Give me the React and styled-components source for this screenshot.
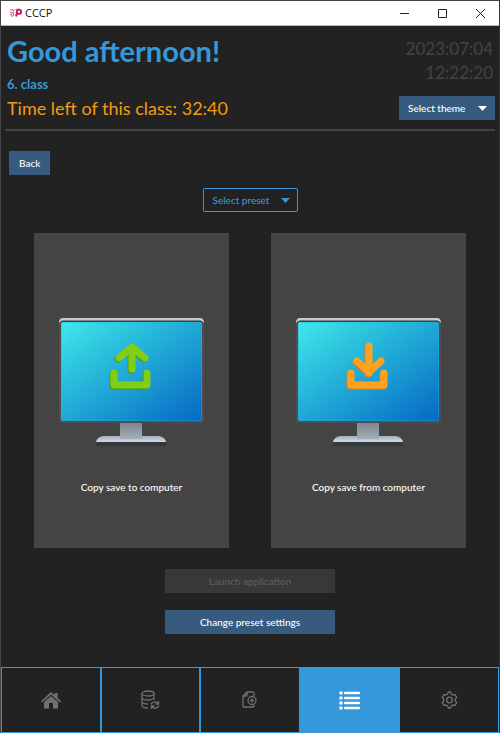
import React from "react";
import styled, { createGlobalStyle, css } from "styled-components";

const GlobalStyle = createGlobalStyle`
  *, *::before, *::after { box-sizing: border-box; }
  body { margin: 0; background: #222; font-family: Lato, "Open Sans", sans-serif; }
  h1, h2, p { margin: 0; }
  button { font: inherit; cursor: pointer; }
`;

const Window = styled.div`
  display: flex;
  flex-direction: column;
  min-height: 100vh;
  border: 1px solid #444;
  border-right-color: #333;
  border-bottom: 0;
  background: #222;
  color: #fff;
`;

const TitleBar = styled.header`
  display: flex;
  align-items: center;
  height: 25px;
  padding-left: 8px;
  background: #fff;
  color: #111;
  border-bottom: 1px solid #bbb;
`;

const AppTitle = styled.span`
  flex: 1;
  padding-left: 3px;
  font-family: "Open Sans", sans-serif;
  font-size: 11px;
  line-height: 16px;
`;

const WindowButton = styled.button`
  display: flex;
  align-items: center;
  justify-content: center;
  width: 38px;
  height: 24px;
  padding: 0;
  border: 0;
  background: none;
  color: #222;
`;

const Top = styled.section`
  display: flex;
  justify-content: space-between;
  margin: 0 4px;
  padding: 7px 0 9px 2px;
  border-bottom: 2px solid #444;
`;

const Greeting = styled.h1`
  font-size: 29px;
  line-height: 36px;
  font-weight: 700;
  color: #3498db;
`;

const ClassName = styled.h2`
  margin-top: 7px;
  font-size: 13px;
  line-height: 16px;
  font-weight: 700;
  color: #3498db;
`;

const TimeLeft = styled.p`
  margin-top: 4px;
  font-size: 18px;
  line-height: 24px;
  color: #f39c12;
`;

const Side = styled.div`
  display: flex;
  flex-direction: column;
  align-items: flex-end;
  justify-content: space-between;
`;

const Clock = styled.time`
  padding: 4px 2px 0 0;
  font-size: 17px;
  line-height: 24px;
  text-align: right;
  color: #444;
`;

const ClockLine = styled.span`
  display: block;
`;

const Button = styled.button`
  display: flex;
  align-items: center;
  justify-content: center;
  height: 24px;
  padding: 0 10px;
  border: 0;
  background: #375a7f;
  color: #fff;
  font-size: 10px;
  line-height: 16px;
  font-weight: 500;
  white-space: nowrap;
  &:disabled {
    background: #383838;
    color: #5e5e5e;
    cursor: default;
  }
`;

const MenuButton = styled(Button)`
  justify-content: space-between;
  width: 96px;
  padding: 0 8px 0 9px;
  ${(p) =>
    p.$outline &&
    css`
      align-self: center;
      width: 95px;
      padding-right: 7px;
      border: 1px solid #3498db;
      border-radius: 2px;
      background: #222;
      color: #3498db;
    `}
`;

const Main = styled.main`
  display: flex;
  flex-direction: column;
  padding: 20px 8px;
`;

const BackButton = styled(Button)`
  align-self: flex-start;
  margin-bottom: 13px;
`;

const Cards = styled.div`
  display: grid;
  grid-template-columns: 1fr 1fr;
  gap: 42px;
  margin: 21px 25px;
`;

const Card = styled.button`
  display: flex;
  flex-direction: column;
  align-items: center;
  gap: 30px;
  padding: 85px 0 53px;
  border: 0;
  background: #444;
  color: #fff;
  font-size: 10px;
  line-height: 16px;
  font-weight: 500;
`;

const Actions = styled.div`
  display: grid;
  grid-template-columns: 170px;
  justify-content: center;
  gap: 17px;
`;

const Nav = styled.nav`
  display: grid;
  grid-template-columns: repeat(5, 1fr);
  margin-top: auto;
`;

const NavButton = styled.button`
  display: flex;
  align-items: center;
  justify-content: center;
  height: 66px;
  padding: 0;
  border: 1px solid #3498db;
  background: ${(p) => (p.$active ? "#3498db" : "#222")};
  color: ${(p) => (p.$active ? "#fff" : "#707070")};
`;

function Caret() {
  return (
    <svg width="9" height="5" viewBox="0 0 9 5" aria-hidden="true">
      <path d="M0 0h9L4.5 5z" fill="currentColor" />
    </svg>
  );
}

function Logo() {
  return (
    <svg width="13" height="10" viewBox="0 0 13 10" aria-hidden="true">
      <path
        d="M1 2h2M3 1l2 2M1 4l2 1 2-1M1 6l2 1M4 5l1 3M2 8h2"
        fill="none"
        stroke="#e0488b"
        strokeWidth="1"
      />
      <path d="M7.2 8.5 8.3 1.8h1.9a2 2 0 0 1 0 4H7.6" fill="none" stroke="#cf1860" strokeWidth="2" />
      <path d="m4.500 3 2-1.500" stroke="#ef6675" />
    </svg>
  );
}

function Monitor({ id, direction }) {
  const upload = direction === "up";
  const arrow = upload ? "M73 51V29M60 40l13-11 13 11" : "M73 28v27M61 43l12 11 12-11";
  const tray = "M55 55v12h33V55";
  const face = upload ? "#80cf16" : "#ffa31e";
  const shade = upload ? "#4b9a13" : "#e47c23";
  return (
    <svg width="146" height="131" viewBox="0 0 146 131" aria-hidden="true">
      <defs>
        <linearGradient id={`${id}-screen`} x1="0" y1="0" x2="1" y2="1">
          <stop offset="0" stopColor="#41e8ea" />
          <stop offset=".32" stopColor="#2abfdc" />
          <stop offset="1" stopColor="#0568c4" />
        </linearGradient>
        <linearGradient id={`${id}-neck`} x1="0" y1="0" x2="0" y2="1">
          <stop offset="0" stopColor="#7b858f" />
          <stop offset="1" stopColor="#a5afb9" />
        </linearGradient>
        <linearGradient id={`${id}-base`} x1="0" y1="0" x2="0" y2="1">
          <stop offset="0" stopColor="#a5aebb" />
          <stop offset="1" stopColor="#d3dae5" />
        </linearGradient>
      </defs>
      <rect x="0" y="3" width="145" height="102" rx="3" fill="#514d50" />
      <path d="M0 5Q0 0 4 0H141Q145 0 145 5L142 3H3z" fill="#c1cbd1" />
      <path d="M1 5Q2 3 4 3H141Q143 3 144 5" fill="none" stroke="#343638" />
      <rect x="2" y="4" width="141" height="99" rx="2" fill={`url(#${id}-screen)`} />
      <rect x="2.500" y="4.500" width="140" height="98" rx="2" fill="none" stroke="#1db1df" opacity=".4" />
      <rect x="61" y="105" width="22" height="16" fill={`url(#${id}-neck)`} />
      <path d="M37 124h70v4H37z" fill="#33383f" />
      <path d="M37 124q1-5 7-6h17v3h22v-3h17q6 1 7 6z" fill={`url(#${id}-base)`} />
      <g fill="none" strokeLinecap="round" strokeLinejoin="round" strokeWidth="7">
        <path d={`${arrow}${tray}`} stroke={shade} transform="translate(-1 1)" />
        <path d={`${arrow}${tray}`} stroke={face} />
      </g>
    </svg>
  );
}

function HomeIcon() {
  return (
    <svg width="20" height="17" viewBox="0 0 20 17" fill="currentColor" aria-hidden="true">
      <path d="M10 0 13.600 3.200V1h3v5L20 9.200l-1 1.200-9-8-9 8L0 9.200z" />
      <path d="m10 4 7 6v6.500h-5V11H8v5.500H3V10z" />
    </svg>
  );
}

function DatabaseIcon() {
  return (
    <svg width="20" height="20" viewBox="0 0 20 20" fill="none" stroke="currentColor" strokeWidth="1.300" aria-hidden="true">
      <ellipse cx="8" cy="3.500" rx="6" ry="2.500" />
      <path d="M2 3.500v12c0 1.400 2.500 2.500 6 2.500M14 3.500v6M2 7.500C2 9 5 10 8 10s6-1 6-2.500M2 11.500C2 13 5 14 8 14" />
      <path d="M11 14.500c1-3 5-3.500 7-1M18.500 11v3h-3M19 15.500c-1 3-5 3.500-7 1M11.500 19v-3h3" />
    </svg>
  );
}

function FileIcon() {
  return (
    <svg width="15" height="18" viewBox="0 0 15 18" fill="none" stroke="currentColor" strokeWidth="1.300" aria-hidden="true">
      <path d="M12 5V2q0-1-1-1H5L1 5v10q0 1 1 1h9q1 0 1-1v-1M5 1v3q0 1-1 1H1" />
      <circle cx="10" cy="9.500" r="4" />
      <path d="M10 7.500v4M8 9.500h4" />
    </svg>
  );
}

function ListIcon() {
  return (
    <svg width="21" height="19" viewBox="0 0 21 19" fill="currentColor" aria-hidden="true">
      {[2, 7, 12, 17].map((y) => (
        <g key={y}>
          <circle cx="2" cy={y} r="1.8" />
          <rect x="5" y={y - 1.3} width="16" height="2.600" rx="1" />
        </g>
      ))}
    </svg>
  );
}

function GearIcon() {
  return (
    <svg width="17" height="18" viewBox="0 0 17 18" fill="none" stroke="currentColor" strokeWidth="1.300" strokeLinejoin="round" aria-hidden="true">
      <path d="M6.700 3 7.400 1h2.200l.7 2 1.700 1 2-.4 1.700 2.800-1.400 1.600v2l1.400 1.600-1.700 2.800-2-.4-1.700 1-.7 2H7.400l-.7-2-1.700-1-2 .4-1.700-2.800L2.700 10V8L1.300 6.400 3 3.600l2 .4z" />
      <circle cx="8.500" cy="9" r="2.800" />
    </svg>
  );
}

const tabs = [
  { label: "Home", Icon: HomeIcon },
  { label: "Sync saves", Icon: DatabaseIcon },
  { label: "Add file", Icon: FileIcon },
  { label: "Presets", Icon: ListIcon, active: true },
  { label: "Settings", Icon: GearIcon },
];

export default function App() {
  return (
    <>
      <GlobalStyle />
      <Window>
        <TitleBar>
          <Logo />
          <AppTitle>CCCP</AppTitle>
          <WindowButton aria-label="Minimize">
            <svg width="9" height="9" viewBox="0 0 9 9"><path d="M0 4.500h9" stroke="currentColor" /></svg>
          </WindowButton>
          <WindowButton aria-label="Maximize">
            <svg width="9" height="9" viewBox="0 0 9 9"><path d="M.5.5h8v8h-8z" fill="none" stroke="currentColor" /></svg>
          </WindowButton>
          <WindowButton aria-label="Close">
            <svg width="9" height="9" viewBox="0 0 9 9"><path d="m0 0 9 9M9 0 0 9" stroke="currentColor" /></svg>
          </WindowButton>
        </TitleBar>
        <Top>
          <div>
            <Greeting>Good afternoon!</Greeting>
            <ClassName>6. class</ClassName>
            <TimeLeft>Time left of this class: 32:40</TimeLeft>
          </div>
          <Side>
            <Clock>
              <ClockLine>2023:07:04</ClockLine>
              <ClockLine>12:22:20</ClockLine>
            </Clock>
            <MenuButton aria-haspopup="menu">Select theme<Caret /></MenuButton>
          </Side>
        </Top>
        <Main>
          <BackButton>Back</BackButton>
          <MenuButton $outline aria-haspopup="menu">Select preset<Caret /></MenuButton>
          <Cards>
            <Card><Monitor id="to" direction="up" />Copy save to computer</Card>
            <Card><Monitor id="from" direction="down" />Copy save from computer</Card>
          </Cards>
          <Actions>
            <Button disabled>Launch application</Button>
            <Button>Change preset settings</Button>
          </Actions>
        </Main>
        <Nav>
          {tabs.map(({ label, Icon, active }) => (
            <NavButton key={label} $active={active} aria-label={label} aria-current={active ? "page" : undefined}>
              <Icon />
            </NavButton>
          ))}
        </Nav>
      </Window>
    </>
  );
}
